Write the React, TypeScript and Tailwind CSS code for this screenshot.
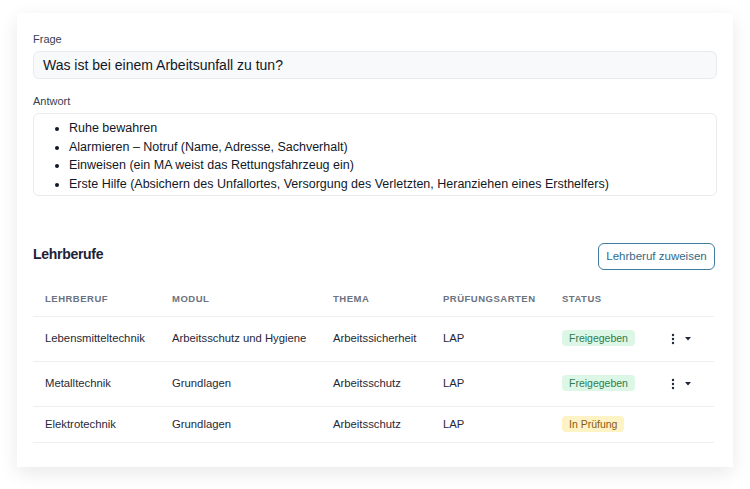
import React from "react";

const rows = [
  { beruf: "Lebensmitteltechnik", modul: "Arbeitsschutz und Hygiene", thema: "Arbeitssicherheit", art: "LAP", status: "ok", actions: true },
  { beruf: "Metalltechnik", modul: "Grundlagen", thema: "Arbeitsschutz", art: "LAP", status: "ok", actions: true },
  { beruf: "Elektrotechnik", modul: "Grundlagen", thema: "Arbeitsschutz", art: "LAP", status: "pending", actions: false },
];

function Kebab() {
  return (
    <svg width="4" height="12" viewBox="0 0 4 12" className="block">
      <circle cx="2" cy="2" r="1.2" fill="#1f2937" />
      <circle cx="2" cy="6" r="1.2" fill="#1f2937" />
      <circle cx="2" cy="10" r="1.2" fill="#1f2937" />
    </svg>
  );
}

function Caret() {
  return (
    <svg width="8" height="5" viewBox="0 0 8 5" className="block">
      <path d="M1 1 L7 1 L4 4.5 Z" fill="#1f2937" />
    </svg>
  );
}

export default function App() {
  return (
    <div
      className="w-[750px] h-[489px] bg-white overflow-hidden pt-[13px]"
      style={{ fontFamily: '"Liberation Sans", Arial, sans-serif' }}
    >
      <div className="ml-[17px] w-[716px] h-[454px] bg-white shadow-[0_6px_18px_rgba(0,0,0,0.09)] px-4 pt-[19px]">
        <div className="text-[11px] leading-[14px] text-[#374151]">Frage</div>
        <div className="mt-[5px] h-[28px] rounded-md border border-[#e8eaee] bg-[#f8f9fa] px-[9px] flex items-center text-[14px] text-[#111827]">
          Was ist bei einem Arbeitsunfall zu tun?
        </div>
        <div className="mt-[15px] text-[11px] leading-[14px] text-[#374151]">Antwort</div>
        <div className="mt-[5px] h-[83px] rounded-md border border-[#e8eaee] bg-white pt-[5px]">
          <ul className="list-disc pl-[35px] text-[12.5px] leading-[18.5px] text-[#111827]">
            <li>Ruhe bewahren</li>
            <li>Alarmieren – Notruf (Name, Adresse, Sachverhalt)</li>
            <li>Einweisen (ein MA weist das Rettungsfahrzeug ein)</li>
            <li>Erste Hilfe (Absichern des Unfallortes, Versorgung des Verletzten, Heranziehen eines Ersthelfers)</li>
          </ul>
        </div>

        <div className="mt-[47px] flex items-start justify-between pr-[2px]">
          <h2 className="pt-[1px] text-[14px] leading-[20px] font-bold text-[#1c2236] tracking-[-0.3px]">Lehrberufe</h2>
          <button className="h-[27px] w-[117px] rounded-md border border-[#3e7d9e] text-[11.5px] text-[#2f6b8b] bg-white">
            Lehrberuf zuweisen
          </button>
        </div>

        <table className="mt-[11px] w-[681px] table-fixed border-collapse">
          <colgroup>
            <col className="w-[127px]" />
            <col className="w-[161px]" />
            <col className="w-[110px]" />
            <col className="w-[119px]" />
            <col className="w-[110px]" />
            <col />
          </colgroup>
          <thead>
            <tr className="h-[35px] border-b border-[#eceef1]">
              {["Lehrberuf", "Modul", "Thema", "Prüfungsarten", "Status", ""].map((h, i) => (
                <th
                  key={i}
                  className="px-3 pt-[2px] text-left align-middle text-[9.5px] font-bold uppercase tracking-[0.5px] text-[#6b7280] whitespace-nowrap"
                >
                  {h}
                </th>
              ))}
            </tr>
          </thead>
          <tbody>
            {rows.map((r, i) => (
              <tr
                key={i}
                className={`border-b border-[#eceef1] text-[11.3px] text-[#1f2937] ${r.actions ? "h-[45px]" : "h-[36px]"}`}
              >
                <td className="px-3 align-middle whitespace-nowrap">{r.beruf}</td>
                <td className="px-3 align-middle whitespace-nowrap">{r.modul}</td>
                <td className="px-3 align-middle whitespace-nowrap">{r.thema}</td>
                <td className="px-3 align-middle whitespace-nowrap">{r.art}</td>
                <td className="px-3 align-middle">
                  {r.status === "ok" ? (
                    <span className="inline-block rounded-[4px] bg-[#dcf7e6] px-[7px] text-[10.5px] leading-[16px] font-medium text-[#2e7d4f]">
                      Freigegeben
                    </span>
                  ) : (
                    <span className="inline-block rounded-[4px] bg-[#fdf3c4] px-[7px] text-[10.5px] leading-[16px] font-medium text-[#8a5a14]">
                      In Prüfung
                    </span>
                  )}
                </td>
                <td className="align-middle pl-[11px]">
                  {r.actions && (
                    <div className="flex items-center gap-[9px]">
                      <Kebab />
                      <Caret />
                    </div>
                  )}
                </td>
              </tr>
            ))}
          </tbody>
        </table>
      </div>
    </div>
  );
}
